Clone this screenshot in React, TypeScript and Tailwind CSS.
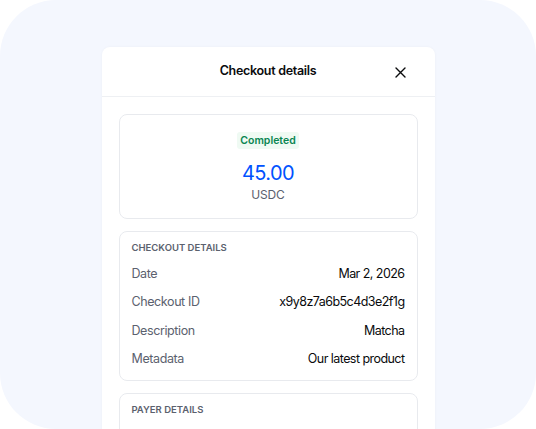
import React from "react";

const font = { fontFamily: "Inter, 'Noto Sans', sans-serif" };

function Row({ label, value }: { label: string; value: string }) {
  return (
    <div className="flex items-center justify-between h-[28.4px]">
      <span className="text-[12.5px] tracking-[-0.4px] text-[#5b616e]">{label}</span>
      <span className="text-[12.5px] tracking-[-0.55px] text-[#0a0b0d]">{value}</span>
    </div>
  );
}

export default function App() {
  return (
    <div className="w-[536px] h-[429px] bg-white" style={font}>
      <div className="w-full h-full rounded-[56px] bg-[#f4f7fe] overflow-hidden flex justify-center pt-[47px]">
        <div className="w-[333px] bg-white rounded-t-[8px] shadow-[0_0_3px_rgba(0,0,0,0.04)] self-start h-[400px]">
          <div className="relative h-[50px] flex items-center justify-center border-b border-[#eef0f3]">
            <span className="text-[12.5px] font-semibold tracking-[-0.3px] text-[#0a0b0d]">Checkout details</span>
            <svg className="absolute right-[29px] top-[20px]" width="11" height="11" viewBox="0 0 11 11" fill="none" stroke="#0a0b0d" strokeWidth="1.4" strokeLinecap="round">
              <path d="M1 1L10 10M10 1L1 10" />
            </svg>
          </div>
          <div className="px-[17px] pt-[17px] flex flex-col gap-[12px]">
            <div className="h-[105px] border border-[#e8eaee] rounded-[8px] flex flex-col items-center pt-[17px]">
              <span className="px-[3px] h-[17px] leading-[17px] rounded-[3px] bg-[#effaf3] text-[#098551] text-[10.5px] font-semibold">Completed</span>
              <span className="mt-[10px] text-[20px] tracking-[-0.6px] leading-[28px] text-[#0052ff]">45.00</span>
              <span className="mt-[0px] text-[12px] tracking-[-0.2px] leading-[16px] text-[#5b616e]">USDC</span>
            </div>
            <div className="border border-[#e8eaee] rounded-[8px] px-[12px] pt-[9px] pb-[6px]">
              <div className="text-[9.5px] font-semibold text-[#5b616e] leading-[14px] mb-[5px]">CHECKOUT DETAILS</div>
              <Row label="Date" value="Mar 2, 2026" />
              <Row label="Checkout ID" value="x9y8z7a6b5c4d3e2f1g" />
              <Row label="Description" value="Matcha" />
              <Row label="Metadata" value="Our latest product" />
            </div>
            <div className="border border-[#e8eaee] rounded-[8px] px-[12px] pt-[9px] h-[80px]">
              <div className="text-[9.5px] font-semibold text-[#5b616e] leading-[14px]">PAYER DETAILS</div>
            </div>
          </div>
        </div>
      </div>
    </div>
  );
}
